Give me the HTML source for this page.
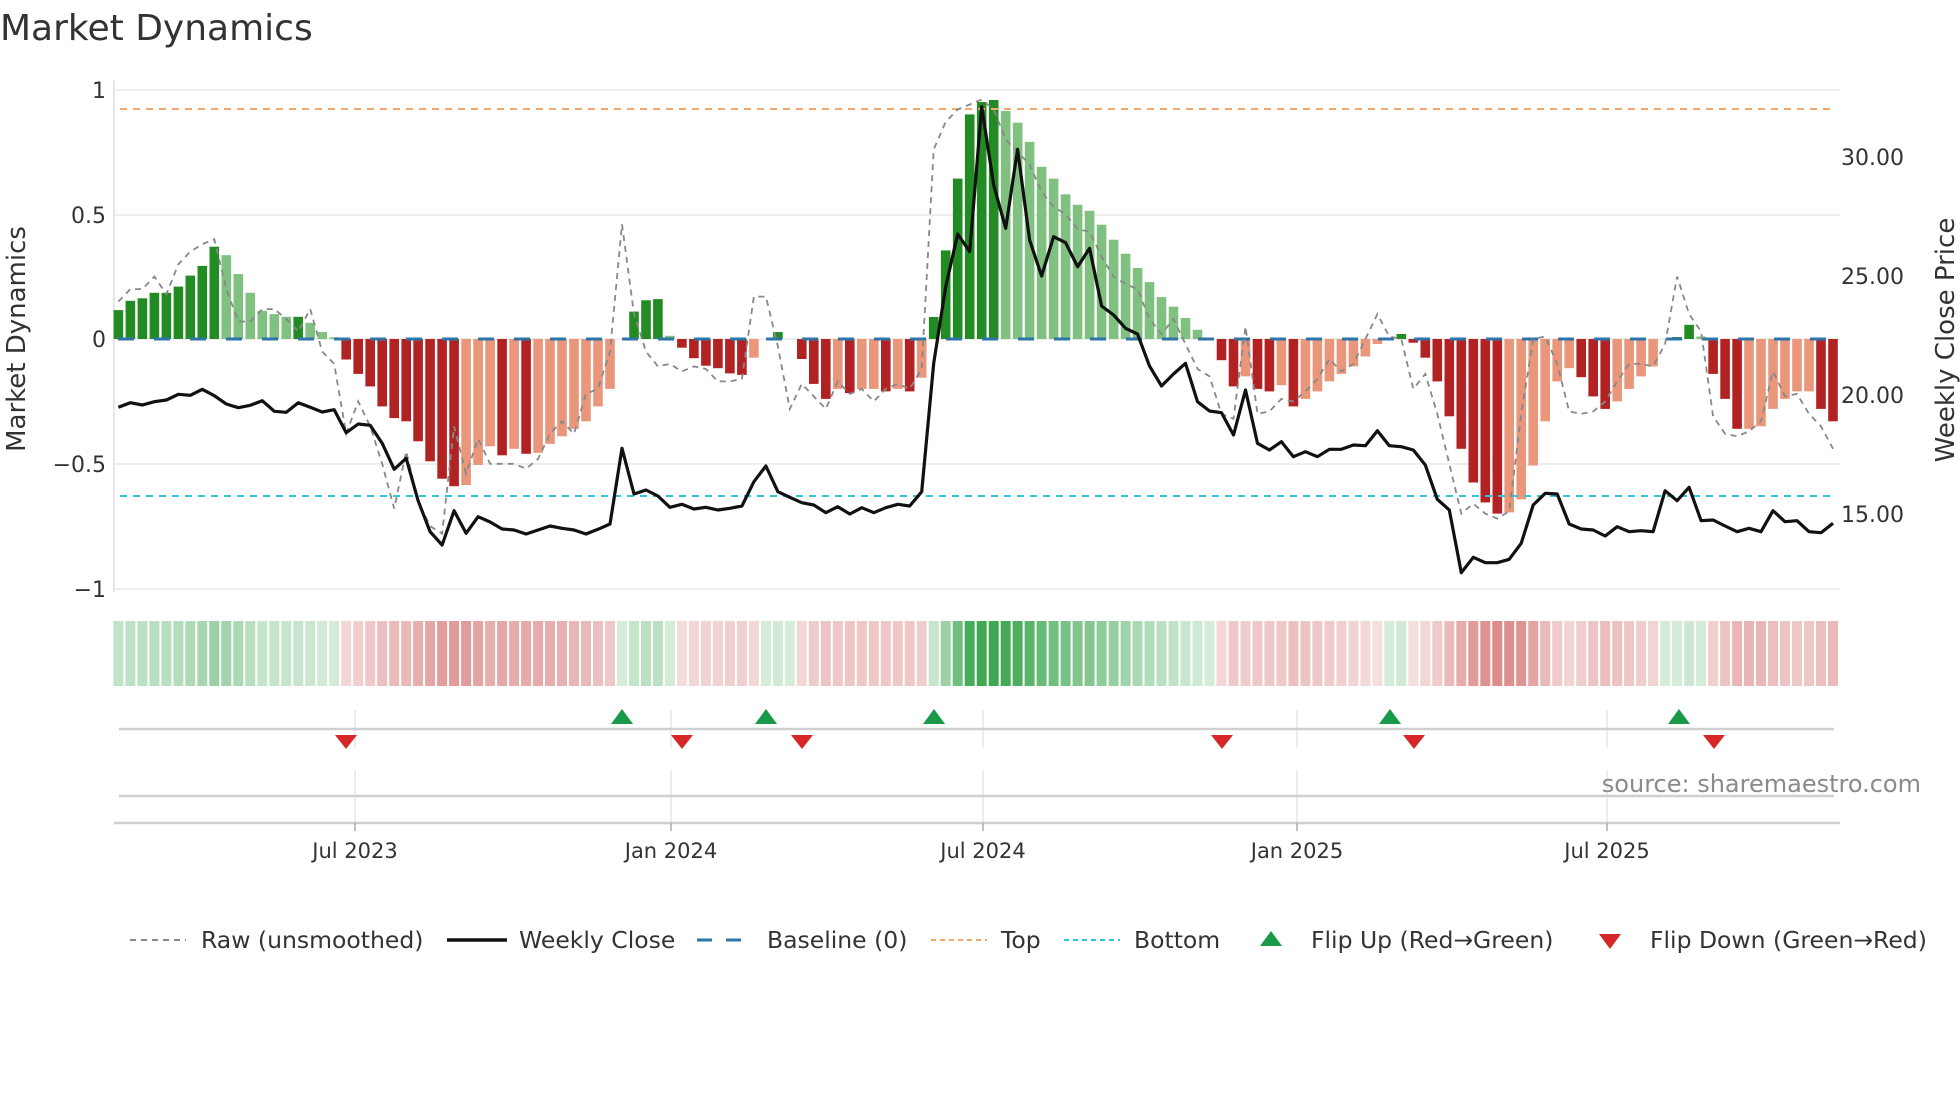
<!DOCTYPE html>
<html><head><meta charset="utf-8"><style>
html,body{margin:0;padding:0;background:#fff;width:1960px;height:1102px;overflow:hidden}
svg{display:block;font-family:"DejaVu Sans","Liberation Sans",sans-serif}
</style></head><body>
<svg id="s" width="1960" height="1102" viewBox="0 0 1960 1102" xmlns="http://www.w3.org/2000/svg">
<text x="0" y="40" font-size="36" fill="#333">Market Dynamics</text>
<g stroke="#eeeeee" stroke-width="2">
<line x1="114" y1="90" x2="1840" y2="90"/><line x1="114" y1="215" x2="1840" y2="215"/>
<line x1="114" y1="339" x2="1840" y2="339"/><line x1="114" y1="464" x2="1840" y2="464"/>
<line x1="114" y1="589" x2="1840" y2="589"/>
</g>
<line x1="114" y1="80" x2="114" y2="592" stroke="#e6e6e6" stroke-width="2"/>
<g font-size="22" fill="#333" text-anchor="end">
<text x="106" y="98">1</text><text x="106" y="223">0.5</text><text x="106" y="347">0</text>
<text x="106" y="472">−0.5</text><text x="106" y="597">−1</text>
</g>
<g font-size="22" fill="#333">
<text x="1841" y="165">30.00</text><text x="1841" y="284">25.00</text>
<text x="1841" y="403">20.00</text><text x="1841" y="522">15.00</text>
</g>
<text transform="translate(25,339) rotate(-90)" font-size="26" fill="#333" text-anchor="middle">Market Dynamics</text>
<text transform="translate(1954,340) rotate(-90)" font-size="26" fill="#333" text-anchor="middle">Weekly Close Price</text>
<g id="bars"></g>
<line x1="118" y1="339" x2="1836" y2="339" stroke="#2f74a8" stroke-width="3" stroke-dasharray="16,20"/>
<line x1="120" y1="109" x2="1830" y2="109" stroke="#f2a96b" stroke-width="2" stroke-dasharray="7,6"/>
<line x1="120" y1="496" x2="1830" y2="496" stroke="#2ec6d8" stroke-width="2" stroke-dasharray="7,6"/>
<polyline id="raw" fill="none" stroke="#888" stroke-width="1.8" stroke-dasharray="6,5"/>
<polyline id="px" fill="none" stroke="#111" stroke-width="3.2" stroke-linejoin="round"/>
<g id="heat"></g>
<g stroke="#e4e8ec" stroke-width="1.5">
<line x1="355" y1="710" x2="355" y2="748"/><line x1="671" y1="710" x2="671" y2="748"/><line x1="983" y1="710" x2="983" y2="748"/><line x1="1297" y1="710" x2="1297" y2="748"/><line x1="1607" y1="710" x2="1607" y2="748"/>
<line x1="355" y1="770" x2="355" y2="822"/><line x1="671" y1="770" x2="671" y2="822"/><line x1="983" y1="770" x2="983" y2="822"/><line x1="1297" y1="770" x2="1297" y2="822"/><line x1="1607" y1="770" x2="1607" y2="822"/>
</g>
<line x1="119" y1="729" x2="1834" y2="729" stroke="#cfcfcf" stroke-width="2.5"/>
<line x1="119" y1="796" x2="1834" y2="796" stroke="#cfcfcf" stroke-width="2.5"/>
<line x1="114" y1="823" x2="1840" y2="823" stroke="#cfcfcf" stroke-width="2.5"/>
<g stroke="#aaa" stroke-width="1.5">
<line x1="355" y1="823" x2="355" y2="831"/><line x1="671" y1="823" x2="671" y2="831"/><line x1="983" y1="823" x2="983" y2="831"/><line x1="1297" y1="823" x2="1297" y2="831"/><line x1="1607" y1="823" x2="1607" y2="831"/>
</g>
<g id="flips"></g>
<g font-size="21" fill="#333" text-anchor="middle">
<text x="355" y="858">Jul 2023</text><text x="671" y="858">Jan 2024</text><text x="983" y="858">Jul 2024</text><text x="1297" y="858">Jan 2025</text><text x="1607" y="858">Jul 2025</text>
</g>
<text x="1921" y="792" font-size="24" fill="#8a8a8a" text-anchor="end">source: sharemaestro.com</text>
<g font-size="23.5" fill="#333">
<line x1="130" y1="940" x2="186" y2="940" stroke="#888" stroke-width="2" stroke-dasharray="6,5"/>
<text x="201" y="948">Raw (unsmoothed)</text>
<line x1="447" y1="940" x2="507" y2="940" stroke="#111" stroke-width="3.5"/>
<text x="519" y="948">Weekly Close</text>
<line x1="697" y1="940" x2="752" y2="940" stroke="#2f74a8" stroke-width="3" stroke-dasharray="15,14"/>
<text x="767" y="948">Baseline (0)</text>
<line x1="931" y1="940" x2="987" y2="940" stroke="#f2a96b" stroke-width="2" stroke-dasharray="5,4"/>
<text x="1001" y="948">Top</text>
<line x1="1064" y1="940" x2="1120" y2="940" stroke="#2ec6d8" stroke-width="2" stroke-dasharray="5,4"/>
<text x="1134" y="948">Bottom</text>
<polygon points="1260,946 1282,946 1271,931" fill="#1a9a48"/>
<text x="1311" y="948">Flip Up (Red→Green)</text>
<polygon points="1599,934 1621,934 1610,949" fill="#d62728"/>
<text x="1650" y="948">Flip Down (Green→Red)</text>
</g>
</svg>
<script>
var B=[[.116,1],[.153,1],[.163,1],[.185,1],[.185,1],[.21,1],[.254,1],[.293,1],[.37,1],[.336,0],[.26,0],[.185,0],[.113,0],[.10,0],[.089,0],[.089,1],[.065,0],[.028,0],[.007,0],
[-.082,1],[-.14,1],[-.19,1],[-.27,1],[-.317,1],[-.33,1],[-.41,1],[-.49,1],[-.56,1],[-.59,1],[-.585,0],[-.505,0],[-.43,0],[-.466,1],[-.44,0],[-.46,1],[-.456,0],[-.42,0],[-.39,0],[-.36,0],[-.33,0],[-.27,0],[-.20,0],[.003,1],
[.11,1],[.155,1],[.16,1],[.013,0],[-.035,1],[-.077,1],[-.107,1],[-.117,1],[-.138,1],[-.144,1],[-.075,0],[.003,0],[.028,1],[.003,0],
[-.08,1],[-.18,1],[-.24,1],[-.20,0],[-.217,1],[-.20,0],[-.20,0],[-.21,1],[-.20,0],[-.21,1],[-.155,0],
[.088,1],[.355,1],[.643,1],[.90,1],[.95,1],[.958,1],[.914,0],[.867,0],[.79,0],[.69,0],[.643,0],[.58,0],[.538,0],[.514,0],[.458,0],[.398,0],[.342,0],[.285,0],[.228,0],[.168,0],[.13,0],[.084,0],[.037,0],[.003,0],
[-.085,1],[-.19,1],[-.15,0],[-.20,1],[-.21,1],[-.185,0],[-.27,1],[-.24,0],[-.21,0],[-.17,0],[-.14,0],[-.11,0],[-.07,0],[-.02,0],[.003,0],[.02,1],[-.015,1],[-.075,1],[-.17,1],[-.31,1],[-.44,1],[-.575,1],[-.655,1],[-.70,1],[-.695,0],[-.643,0],[-.507,0],[-.33,0],[-.17,0],[-.117,0],
[-.153,1],[-.23,1],[-.28,1],[-.25,0],[-.20,0],[-.15,0],[-.11,0],[.003,0],[.008,1],[.057,1],[.01,0],[-.14,1],[-.24,1],[-.36,1],[-.36,0],[-.35,0],[-.28,0],[-.24,0],[-.21,0],[-.21,0],[-.28,1],[-.33,1]];
var P3=[982,968,975,965,960,943,946,928,947,972,983,976,962,994,997,968,982,996,989,1058,1032,1036,1090,1168,1135,1262,1355,1395,1292,1360,1310,1326,1347,1350,1362,1350,1338,1345,1350,1362,1348,1332,1105,1242,1230,1248,1282,1273,1287,1282];
var P4=[1285,1278,1290,1285,1278,1205,1158,1235,1252,1268,1275,1298,1280,1302,1283,1298,1283,1273,1278,1235,850,620,462,515,80,315,445,208,480,588,470,488,560,505,678,705,745,762,858,918,882,850,965,993,998,1065,930,1090,1110,1085];
var P5=[1100,1085,1130,1115,1130,1108,1108,1095,1097,1052,1097,1100,1110,1155,1258,1290,1478,1432,1448,1448,1438,1390,1275,1240,1242,1332,1347,1350,1368,1340,1355,1352,1355,1232,1262,1222,1322,1320,1338,1355,1345,1355,1292,1325,1322,1355,1358,1330];
var P=P3.concat(P4.slice(2),P5.slice(2));
var R=[.15,.2,.2,.25,.18,.3,.35,.38,.4,.2,.07,.07,.12,.12,.08,.03,.12,-.05,-.1,-.38,-.25,-.35,-.5,-.68,-.45,-.65,-.75,-.78,-.35,-.54,-.4,-.5,-.5,-.5,-.52,-.48,-.38,-.33,-.38,-.22,-.2,-.05,.46,.1,-.05,-.11,-.1,-.13,-.11,-.12,-.17,-.17,-.16,.17,.17,-.03,-.28,-.18,-.23,-.28,-.17,-.22,-.2,-.25,-.2,-.18,-.2,-.12,.76,.87,.92,.94,.96,.92,.8,.75,.7,.59,.53,.5,.44,.43,.33,.25,.22,.2,.08,.02,.08,-.02,-.12,-.15,-.3,-.32,.05,-.3,-.29,-.24,-.25,-.21,-.16,-.08,-.13,-.1,0,.1,.01,0,-.2,-.14,-.3,-.5,-.7,-.66,-.7,-.72,-.69,-.3,0,.01,-.1,-.29,-.3,-.29,-.25,-.17,-.1,-.1,-.11,-.02,.25,.1,.03,-.31,-.38,-.39,-.37,-.33,-.13,-.23,-.22,-.3,-.35,-.44];
var bars="",heat="",px=[],rw=[];
for(var i=0;i<B.length;i++){
 var x=118.4+11.99*i,v=B[i][0],d=B[i][1];
 var h=Math.abs(v)*249.5,y=v>=0?339-h:339;
 var c=v>=0?(d?"#238b23":"#80c080"):(d?"#b22222":"#e9967a");
 if(h>0.8)bars+='<rect x="'+(x-4.8).toFixed(1)+'" y="'+y.toFixed(1)+'" width="9.6" height="'+h.toFixed(1)+'" fill="'+c+'"/>';
 var a=0.2+0.75*Math.min(1,Math.abs(v));
 var hc=v>=0?"rgba(46,160,67,"+a.toFixed(2)+")":"rgba(200,70,70,"+(a*0.85).toFixed(2)+")";
 heat+='<rect x="'+(x-5).toFixed(1)+'" y="621" width="10" height="65" fill="'+hc+'"/>';
 px.push(x.toFixed(1)+","+(80+P[i]/3).toFixed(1));
 rw.push(x.toFixed(1)+","+(339-R[i]*249.5).toFixed(1));
}
document.getElementById("bars").innerHTML=bars;
document.getElementById("heat").innerHTML=heat;
document.getElementById("px").setAttribute("points",px.join(" "));
document.getElementById("raw").setAttribute("points",rw.join(" "));
var f="";
[622,766,934,1390,1679].forEach(function(x){f+='<polygon points="'+(x-11)+',724 '+(x+11)+',724 '+x+',709" fill="#1a9a48"/>';});
[346,682,802,1222,1414,1714].forEach(function(x){f+='<polygon points="'+(x-11)+',735 '+(x+11)+',735 '+x+',749" fill="#d62728"/>';});
document.getElementById("flips").innerHTML=f;
</script>
</body></html>
